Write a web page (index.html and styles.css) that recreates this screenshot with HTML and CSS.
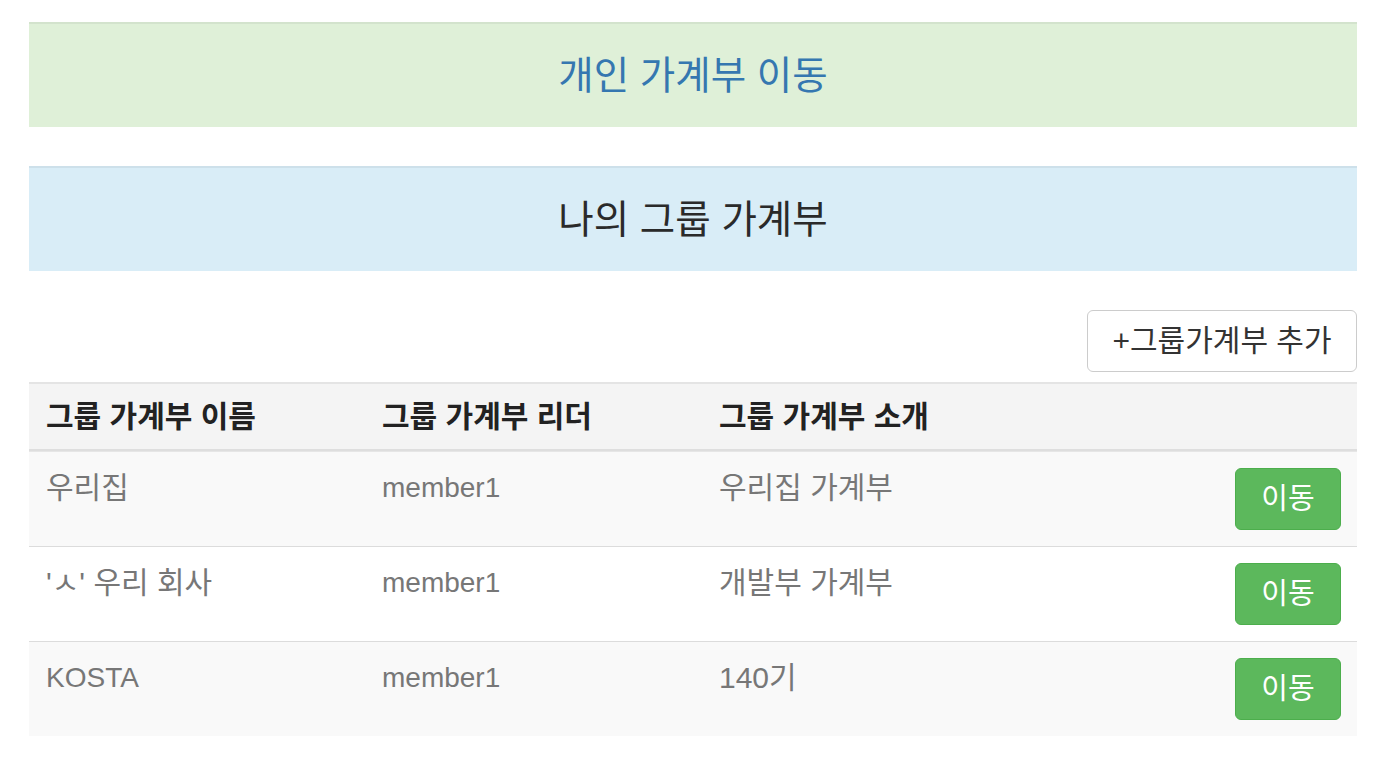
FILE: index.html
```html
<!DOCTYPE html>
<html lang="ko">
<head>
<meta charset="utf-8">
<title>그룹 가계부</title>
<link rel="stylesheet" href="styles.css">
</head>
<body>
<div class="container">
  <a class="panel panel-success" href="#">개인 가계부 이동</a>
  <div class="panel panel-info">나의 그룹 가계부</div>
  <div class="toolbar">
    <button class="btn btn-default">+그룹가계부 추가</button>
  </div>
  <table class="table">
    <thead>
      <tr>
        <th class="c1">그룹 가계부 이름</th>
        <th class="c2">그룹 가계부 리더</th>
        <th class="c3">그룹 가계부 소개</th>
        <th class="c4"></th>
      </tr>
    </thead>
    <tbody>
      <tr class="odd">
        <td>우리집</td>
        <td class="en">member1</td>
        <td>우리집 가계부</td>
        <td class="act"><button class="btn btn-success">이동</button></td>
      </tr>
      <tr>
        <td>'ㅅ' 우리 회사</td>
        <td class="en">member1</td>
        <td>개발부 가계부</td>
        <td class="act"><button class="btn btn-success">이동</button></td>
      </tr>
      <tr class="odd">
        <td class="en">KOSTA</td>
        <td class="en">member1</td>
        <td>140기</td>
        <td class="act"><button class="btn btn-success">이동</button></td>
      </tr>
    </tbody>
  </table>
</div>
</body>
</html>
```

FILE: styles.css
```css
html, body {
  margin: 0;
  padding: 0;
  background: #fff;
}

body {
  font-family: "Liberation Sans", "Noto Sans CJK KR", sans-serif;
  color: #333;
}

.container {
  width: 1328px;
  margin-left: 29px;
  padding-top: 22px;
  display: flex;
  flex-direction: column;
}

.panel {
  height: 105px;
  display: flex;
  align-items: center;
  justify-content: center;
  font-size: 38.5px;
  line-height: 44px;
  box-sizing: border-box;
  border-top: 2px solid rgba(0, 0, 0, 0.05);
  text-decoration: none;
}

.panel-success {
  background: #dff0d8;
  color: #3577b0;
  margin-bottom: 39px;
}

.panel-info {
  background: #d9edf7;
  color: #2a2a2a;
  margin-bottom: 39px;
}

.toolbar {
  display: flex;
  justify-content: flex-end;
  margin-bottom: 10px;
}

.btn {
  font-family: "Liberation Sans", "Noto Sans CJK KR", sans-serif;
  font-size: 30px;
  line-height: 36px;
  height: 62px;
  box-sizing: border-box;
  border-radius: 6px;
  border: 1.5px solid #ccc;
  cursor: pointer;
  padding: 0;
}

.btn-default {
  width: 270px;
  background: #fff;
  color: #333;
}

.btn-success {
  width: 106px;
  background: #5cb85c;
  border-color: #4cae4c;
  color: #fff;
  font-size: 29px;
}

.table {
  width: 100%;
  border-collapse: separate;
  border-spacing: 0;
  table-layout: fixed;
  font-size: 30px;
  line-height: 38px;
}

.table th,
.table td {
  text-align: left;
  vertical-align: top;
  padding: 16px 16px 16px 17px;
}

.table thead tr {
  background: #f4f4f4;
}

.table th {
  font-weight: bold;
  color: #222;
  border-top: 2px solid #e4e4e4;
  border-bottom: 2px solid #dedede;
  padding-top: 14px;
  padding-bottom: 13px;
}

.c1 { width: 303px; }
.c2 { width: 304px; }
.c3 { width: 304px; }

.table td {
  color: #777;
  border-top: 1px solid #dcdcdc;
  padding-top: 17px;
  padding-bottom: 16px;
}

.table tbody tr:first-child td {
  border-top-color: #e6e6e6;
}

.table tbody tr.odd {
  background: #f9f9f9;
}

.table td.en {
  font-size: 28px;
}

.table td.act {
  text-align: right;
  padding: 16px 16px 16px 0;
}

.table td.act .btn {
  display: block;
  margin-left: auto;
}
```
